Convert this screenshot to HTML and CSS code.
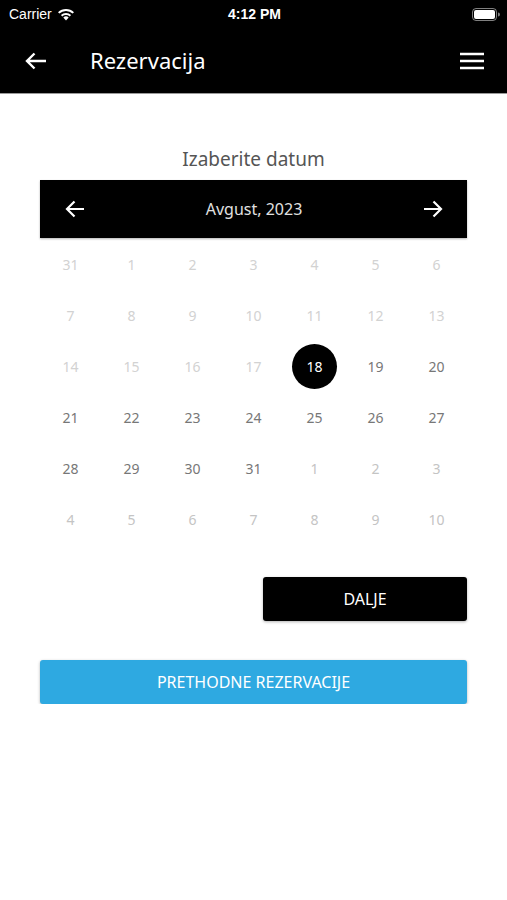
FILE: index.html
```html
<!DOCTYPE html>
<html>
  <head>
    <title>Rezervacija</title>
    <link rel="stylesheet" href="styles.css">
  </head>
  <body>
    <div class="header">
      <div class="status-bar">
        <div class="status-left">
          Carrier
          <svg class="wifi" width="18" height="13" viewBox="0 0 18 13">
            <path d="M9 12.5 L6.3 9.6 A4 4 0 0 1 11.7 9.6 Z" fill="#fff"/>
            <path d="M4.6 7.8 A6.4 6.4 0 0 1 13.4 7.8" stroke="#fff" stroke-width="2" fill="none"/>
            <path d="M1.7 4.9 A10.5 10.5 0 0 1 16.3 4.9" stroke="#fff" stroke-width="2" fill="none"/>
          </svg>
        </div>
        <div class="status-time">4:12 PM</div>
        <div class="status-right">
          <svg width="28" height="13" viewBox="0 0 28 13">
            <rect x="0.5" y="0.5" width="24" height="12" rx="3.5" fill="none" stroke="#fff" stroke-opacity="0.5"/>
            <rect x="2" y="2" width="21" height="9" rx="2" fill="#fff"/>
            <path d="M26 4.5 A2 2 0 0 1 26 8.5 Z" fill="#fff" fill-opacity="0.5"/>
          </svg>
        </div>
      </div>
      <div class="nav-bar">
        <svg class="nav-back" width="22" height="18" viewBox="0 0 22 18">
          <path d="M21 9 H2 M9.5 1.5 L2 9 L9.5 16.5" stroke="#fff" stroke-width="2.4" fill="none"/>
        </svg>
        <div class="nav-title">Rezervacija</div>
        <svg class="nav-menu" width="24" height="18" viewBox="0 0 24 18">
          <path d="M0 2 H24 M0 9 H24 M0 16 H24" stroke="#fff" stroke-width="2.4"/>
        </svg>
      </div>
    </div>

    <div class="content">
      <h2 class="page-title">Izaberite datum</h2>
      <div class="calendar">
        <div class="cal-head">
          <svg width="20" height="18" viewBox="0 0 20 18">
            <path d="M19 9 H2 M9.5 1.5 L2 9 L9.5 16.5" stroke="#fff" stroke-width="2.2" fill="none"/>
          </svg>
          <div class="cal-month">Avgust, 2023</div>
          <svg width="20" height="18" viewBox="0 0 20 18">
            <path d="M1 9 H18 M10.5 1.5 L18 9 L10.5 16.5" stroke="#fff" stroke-width="2.2" fill="none"/>
          </svg>
        </div>
        <div class="cal-grid">
          <div class="day dim">31</div><div class="day dim">1</div><div class="day dim">2</div><div class="day dim">3</div><div class="day dim">4</div><div class="day dim">5</div><div class="day dim">6</div>
          <div class="day dim">7</div><div class="day dim">8</div><div class="day dim">9</div><div class="day dim">10</div><div class="day dim">11</div><div class="day dim">12</div><div class="day dim">13</div>
          <div class="day dim">14</div><div class="day dim">15</div><div class="day dim">16</div><div class="day dim">17</div><div class="day selected"><span>18</span></div><div class="day">19</div><div class="day">20</div>
          <div class="day">21</div><div class="day">22</div><div class="day">23</div><div class="day">24</div><div class="day">25</div><div class="day">26</div><div class="day">27</div>
          <div class="day">28</div><div class="day">29</div><div class="day">30</div><div class="day">31</div><div class="day other">1</div><div class="day other">2</div><div class="day other">3</div>
          <div class="day other">4</div><div class="day other">5</div><div class="day other">6</div><div class="day other">7</div><div class="day other">8</div><div class="day other">9</div><div class="day other">10</div>
        </div>
      </div>
      <div class="actions">
        <button class="btn btn-next">DALJE</button>
      </div>
      <button class="btn btn-history">PRETHODNE REZERVACIJE</button>
    </div>
  </body>
</html>
```

FILE: styles.css
```css
body {
  margin: 0;
  font-family: "Noto Sans", "Open Sans", sans-serif;
  background-color: #ffffff;
}
.header {
  background-color: #000000;
  color: white;
  border-bottom: 1px solid #9a9a9a;
}
.status-bar {
  height: 28px;
  display: flex;
  align-items: center;
  justify-content: space-between;
  padding: 0 7px 0 9px;
  font-family: "Liberation Sans", Arial, sans-serif;
  font-size: 14px;
}
.status-left {
  display: flex;
  align-items: center;
  gap: 5px;
  width: 120px;
}
.status-time {
  font-weight: bold;
}
.status-right {
  width: 120px;
  display: flex;
  justify-content: flex-end;
}
.nav-bar {
  height: 65px;
  display: flex;
  align-items: center;
  padding: 0 23px 0 25px;
}
.nav-title {
  flex: 1;
  margin-left: 43px;
  font-size: 22px;
  padding-bottom: 2px;
}
.content {
  padding: 0 40px;
}
.page-title {
  margin: 52px 0 0;
  height: 34px;
  text-align: center;
  font-size: 19px;
  font-weight: normal;
  color: #555555;
}
.cal-head {
  height: 58px;
  background-color: #000000;
  display: flex;
  align-items: center;
  justify-content: space-between;
  padding: 0 24px 0 25px;
  box-shadow: 0 1px 2px rgba(0, 0, 0, 0.3);
}
.cal-month {
  color: #e0e0e0;
  font-size: 16px;
}
.cal-grid {
  display: grid;
  grid-template-columns: repeat(7, 1fr);
  grid-auto-rows: 51px;
  padding-top: 1px;
}
.day {
  display: flex;
  align-items: center;
  justify-content: center;
  font-size: 14px;
  color: #777777;
}
.day.dim {
  color: #d2d2d2;
}
.day.other {
  color: #c4c4c4;
}
.day.selected span {
  width: 45px;
  height: 45px;
  border-radius: 50%;
  background-color: #000000;
  color: #ffffff;
  display: flex;
  align-items: center;
  justify-content: center;
}
.actions {
  display: flex;
  justify-content: flex-end;
  margin-top: 32px;
}
.btn {
  font-family: "Noto Sans", "Open Sans", sans-serif;
  height: 44px;
  border: none;
  border-radius: 3px;
  font-size: 16px;
  color: white;
  box-shadow: 0 1px 3px rgba(0, 0, 0, 0.3);
}
.btn-next {
  width: 204px;
  background-color: #000000;
}
.btn-history {
  width: 100%;
  margin-top: 39px;
  background-color: #2ea9e1;
}
```
